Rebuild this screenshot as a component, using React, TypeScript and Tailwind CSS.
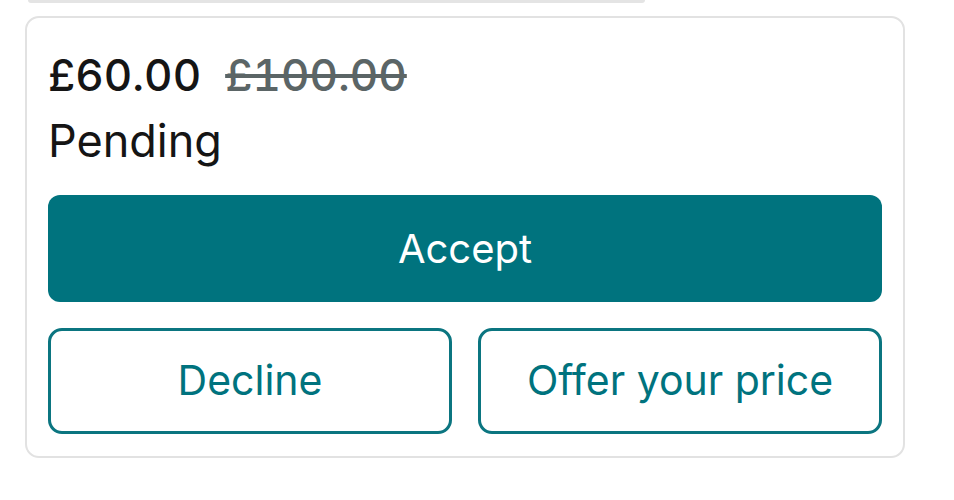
import React from 'react';

const outline =
  'h-[106px] rounded-[14px] border-[3px] border-[#0b7580] bg-white text-[41px] text-[#00737e]';

export default function App() {
  return (
    <div className="w-[954px] h-[500px] bg-white font-['Inter',sans-serif] overflow-hidden">
      {/* bottom edge of the previous bubble */}
      <div className="ml-[28px] w-[617px] h-[3px] bg-[#e4e4e4] rounded-b-[10px]" />

      <div className="mt-[13px] ml-[25px] w-[880px] border-2 border-[#e2e2e2] rounded-[14px] px-[21px] pt-[31px] pb-[22px]">
        <div className="flex items-baseline gap-[24px] text-[44px] leading-[52px] tabular-nums">
          <span className="font-medium text-[#151515]">£60.00</span>
          <span className="font-medium text-[#5b6566] line-through">£100.00</span>
        </div>
        <p className="mt-[14px] text-[45px] leading-[52px] text-[#151515]">Pending</p>

        <button className="mt-[28px] w-full h-[107px] rounded-[12px] bg-[#00737e] text-white text-[40px]">
          Accept
        </button>

        <div className="grid grid-cols-2 gap-[26px] mt-[26px]">
          <button className={outline}>Decline</button>
          <button className={outline}>Offer your price</button>
        </div>
      </div>
    </div>
  );
}
